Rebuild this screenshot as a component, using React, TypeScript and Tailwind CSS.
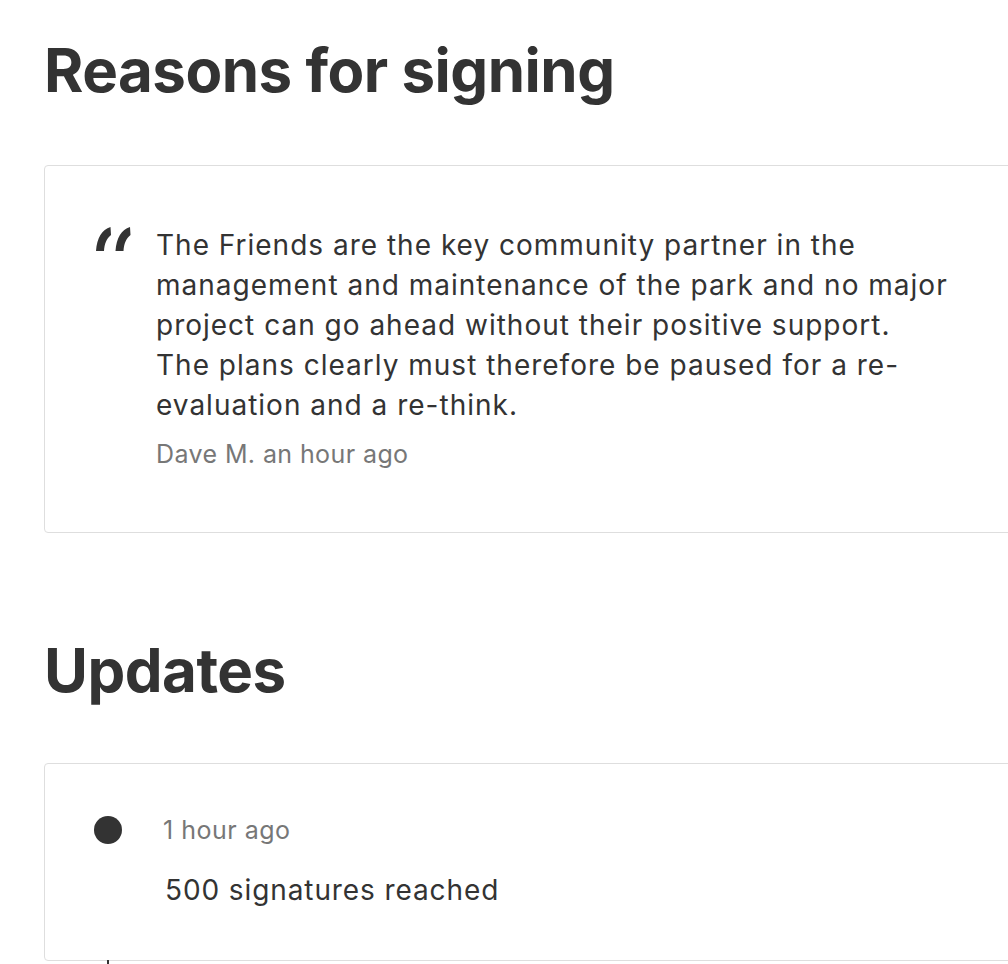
import React from "react";

const font = { fontFamily: "Inter, 'Noto Sans', sans-serif" };

function QuoteMark() {
  return (
    <svg width="36" height="26" viewBox="0 0 36 26" className="shrink-0 mt-[1px]" aria-hidden>
      <path d="M0 25 L8 25 C8.4 18 10.5 12.5 15 9 L14.5 1 C6 3.5 1 12 0 25 Z" fill="#333" />
      <path d="M19.5 25 L27.5 25 C27.9 18 30 12.5 34.5 9 L34 1 C25.5 3.5 20.5 12 19.5 25 Z" fill="#333" />
    </svg>
  );
}

export default function App() {
  return (
    <div className="w-[1008px] h-[964px] overflow-hidden bg-white text-[#333]" style={font}>
      <div className="pl-[44px]">
        <h1 className="pt-[30px] text-[60px] leading-[80px] font-bold tracking-[-0.5px]">Reasons for signing</h1>

        <div className="mt-[55px] w-[1100px] border border-[#dedede] rounded-[4px] pt-[59px] pb-[60px] pl-[51px] flex gap-[24px]">
          <QuoteMark />
          <div className="w-[815px]">
            <p className="text-[28px] leading-[40px] tracking-[1px]">
              The Friends are the key community partner in the management and maintenance of the park and no major
              project can go ahead without their positive support.
              <br />
              The plans clearly must therefore be paused for a re-evaluation and a re-think.
            </p>
            <p className="mt-[11px] text-[25px] leading-[36px] tracking-[0.4px] text-[#777]">Dave M. an hour ago</p>
          </div>
        </div>

        <h2 className="mt-[97px] text-[60px] leading-[80px] font-bold tracking-[-0.5px]">Updates</h2>

        <div className="relative mt-[53px] w-[1100px] border border-[#dedede] rounded-[4px] pt-[48px] pb-[50px] pl-[49px]">
          <div className="flex items-center gap-[41px]">
            <span className="w-[28px] h-[28px] rounded-full bg-[#333] shrink-0" />
            <span className="text-[25px] leading-[36px] tracking-[0.5px] text-[#777]">1 hour ago</span>
          </div>
          <p className="mt-[22px] pl-[71px] text-[28px] leading-[40px] tracking-[0.9px]">500 signatures reached</p>
          <span className="absolute left-[62px] top-full w-[2px] h-[10px] bg-[#333]" />
        </div>
      </div>
    </div>
  );
}
